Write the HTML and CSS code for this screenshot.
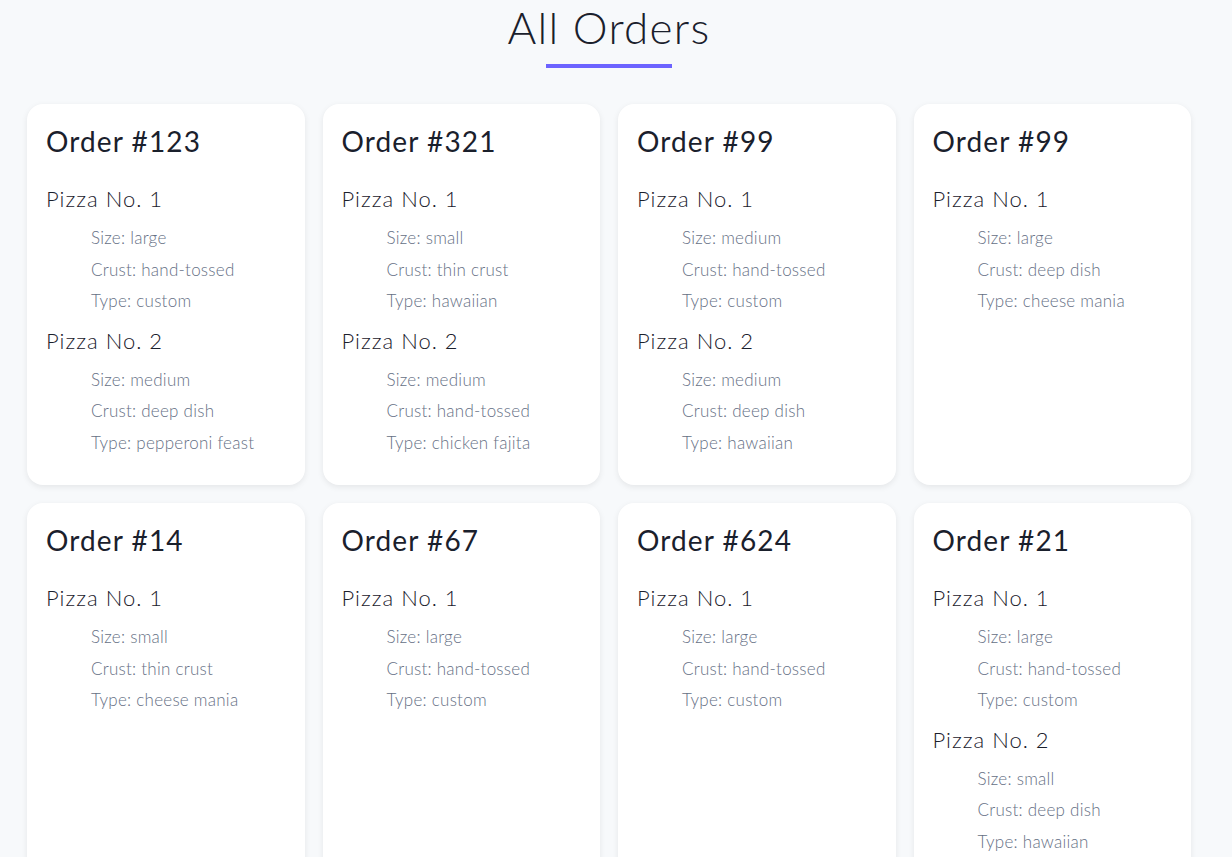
FILE: index.html
```html
<!DOCTYPE html>
<html lang="en">
<head>
<meta charset="utf-8">
<title>All Orders</title>
<link rel="stylesheet" href="styles.css">
</head>
<body>
<main class="page">
  <header class="page-header">
    <h1 class="page-title">All Orders</h1>
    <div class="title-bar"></div>
  </header>
  <section class="orders">
    <article class="card">
      <h2 class="order-title">Order #123</h2>
      <div class="pizza">
        <h3 class="pizza-title">Pizza No. 1</h3>
        <ul class="details"><li>Size: large</li><li>Crust: hand-tossed</li><li>Type: custom</li></ul>
      </div>
      <div class="pizza">
        <h3 class="pizza-title">Pizza No. 2</h3>
        <ul class="details"><li>Size: medium</li><li>Crust: deep dish</li><li>Type: pepperoni feast</li></ul>
      </div>
    </article>
    <article class="card">
      <h2 class="order-title">Order #321</h2>
      <div class="pizza">
        <h3 class="pizza-title">Pizza No. 1</h3>
        <ul class="details"><li>Size: small</li><li>Crust: thin crust</li><li>Type: hawaiian</li></ul>
      </div>
      <div class="pizza">
        <h3 class="pizza-title">Pizza No. 2</h3>
        <ul class="details"><li>Size: medium</li><li>Crust: hand-tossed</li><li>Type: chicken fajita</li></ul>
      </div>
    </article>
    <article class="card">
      <h2 class="order-title">Order #99</h2>
      <div class="pizza">
        <h3 class="pizza-title">Pizza No. 1</h3>
        <ul class="details"><li>Size: medium</li><li>Crust: hand-tossed</li><li>Type: custom</li></ul>
      </div>
      <div class="pizza">
        <h3 class="pizza-title">Pizza No. 2</h3>
        <ul class="details"><li>Size: medium</li><li>Crust: deep dish</li><li>Type: hawaiian</li></ul>
      </div>
    </article>
    <article class="card">
      <h2 class="order-title">Order #99</h2>
      <div class="pizza">
        <h3 class="pizza-title">Pizza No. 1</h3>
        <ul class="details"><li>Size: large</li><li>Crust: deep dish</li><li>Type: cheese mania</li></ul>
      </div>
    </article>
    <article class="card">
      <h2 class="order-title">Order #14</h2>
      <div class="pizza">
        <h3 class="pizza-title">Pizza No. 1</h3>
        <ul class="details"><li>Size: small</li><li>Crust: thin crust</li><li>Type: cheese mania</li></ul>
      </div>
    </article>
    <article class="card">
      <h2 class="order-title">Order #67</h2>
      <div class="pizza">
        <h3 class="pizza-title">Pizza No. 1</h3>
        <ul class="details"><li>Size: large</li><li>Crust: hand-tossed</li><li>Type: custom</li></ul>
      </div>
    </article>
    <article class="card">
      <h2 class="order-title">Order #624</h2>
      <div class="pizza">
        <h3 class="pizza-title">Pizza No. 1</h3>
        <ul class="details"><li>Size: large</li><li>Crust: hand-tossed</li><li>Type: custom</li></ul>
      </div>
    </article>
    <article class="card">
      <h2 class="order-title">Order #21</h2>
      <div class="pizza">
        <h3 class="pizza-title">Pizza No. 1</h3>
        <ul class="details"><li>Size: large</li><li>Crust: hand-tossed</li><li>Type: custom</li></ul>
      </div>
      <div class="pizza">
        <h3 class="pizza-title">Pizza No. 2</h3>
        <ul class="details"><li>Size: small</li><li>Crust: deep dish</li><li>Type: hawaiian</li></ul>
      </div>
    </article>
  </section>
</main>
</body>
</html>
```

FILE: styles.css
```css
* { box-sizing: border-box; }

html, body {
  margin: 0;
  padding: 0;
  background: #f7f9fb;
  font-family: Lato, "Open Sans", sans-serif;
  color: #1a202c;
}

.page {
  padding: 0 41px 40px 27px;
}

.page-header {
  display: flex;
  flex-direction: column;
  align-items: center;
  padding-top: 1px;
}

.page-title {
  margin: 0;
  font-size: 44px;
  font-weight: 300;
  line-height: 52px;
  letter-spacing: 1.3px;
  color: #1a202c;
}

.title-bar {
  width: 126px;
  height: 4px;
  margin-top: 11px;
  background: #6c63ff;
}

.orders {
  display: grid;
  grid-template-columns: repeat(4, 1fr);
  gap: 18px;
  margin-top: 36px;
}

.card {
  background: #ffffff;
  border-radius: 16px;
  box-shadow: 0 2px 6px rgba(0, 0, 0, 0.08);
  padding: 18px 19px 27px;
  min-height: 381px;
}

.order-title {
  margin: 0 0 24px;
  font-size: 28px;
  font-weight: 400;
  line-height: 38px;
  letter-spacing: 1.1px;
  color: #1a202c;
}

.pizza + .pizza {
  margin-top: 9px;
}

.pizza-title {
  margin: 0;
  font-size: 22px;
  font-weight: 300;
  line-height: 30px;
  letter-spacing: 1px;
  color: #1a202c;
}

.details {
  list-style: none;
  margin: 8px 0 0;
  padding: 0 0 0 45px;
}

.details li {
  font-size: 17px;
  font-weight: 300;
  line-height: 31.5px;
  letter-spacing: 0.25px;
  color: #667085;
}
```
